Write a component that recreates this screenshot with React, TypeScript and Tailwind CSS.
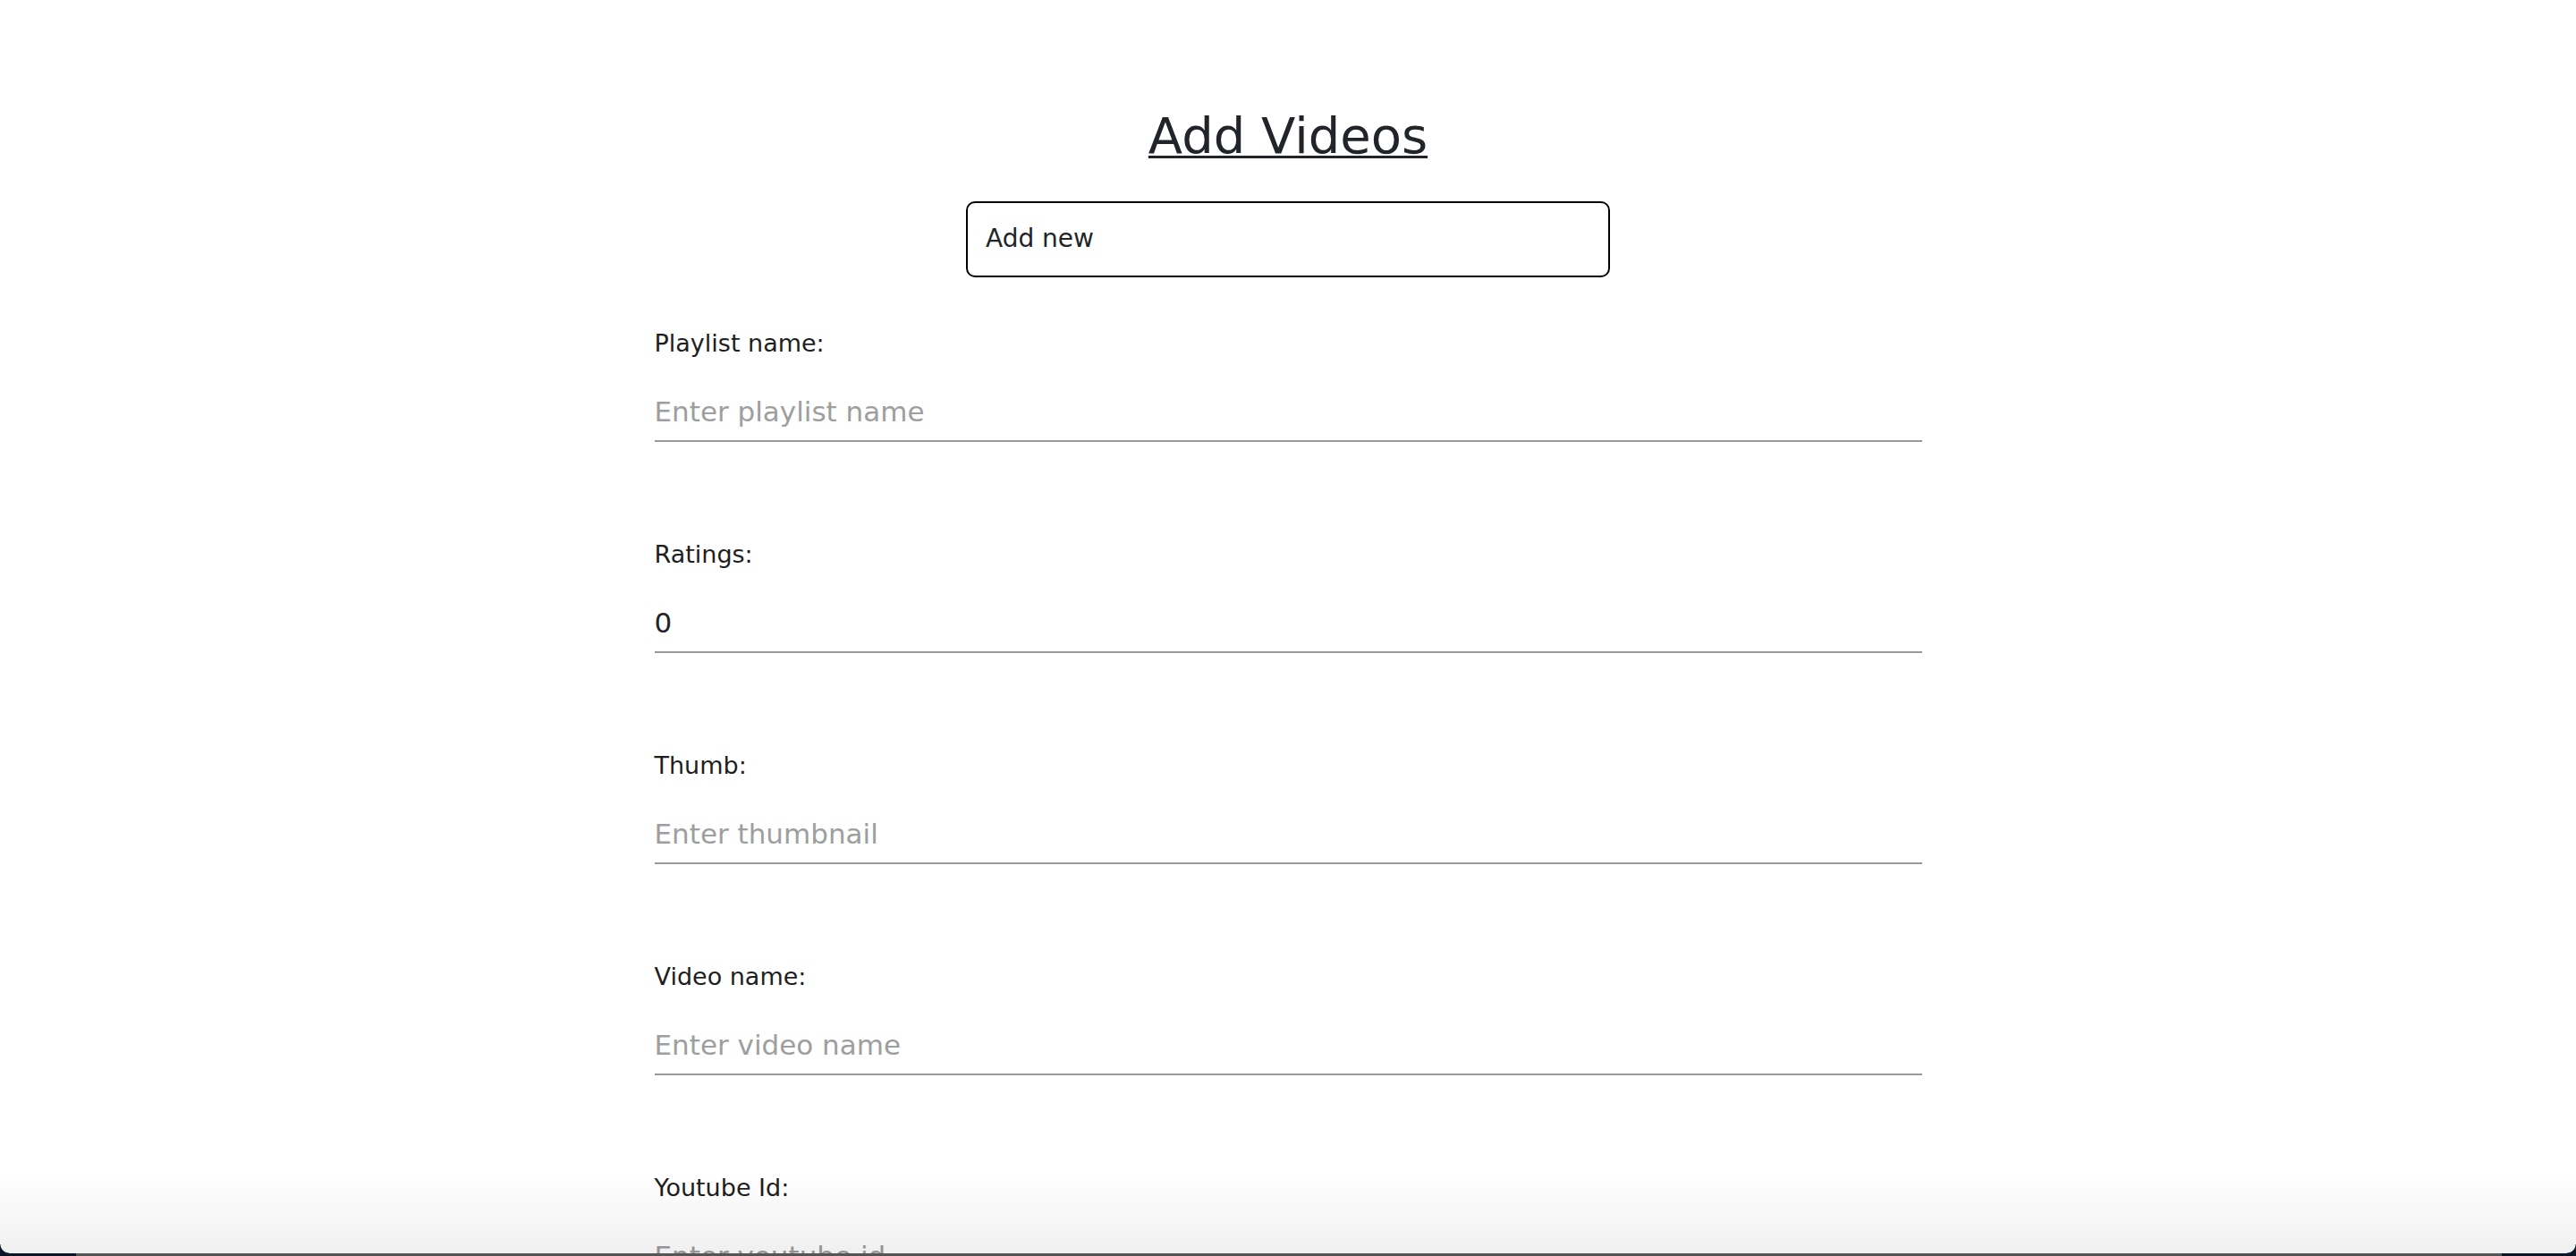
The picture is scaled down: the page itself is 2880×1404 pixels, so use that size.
import React from 'react';

interface Field {
  label: string;
  placeholder: string;
  value?: string;
}

const fields: Field[] = [
  { label: 'Playlist name:', placeholder: 'Enter playlist name' },
  { label: 'Ratings:', placeholder: 'Enter ratings', value: '0' },
  { label: 'Thumb:', placeholder: 'Enter thumbnail' },
  { label: 'Video name:', placeholder: 'Enter video name' },
  { label: 'Youtube Id:', placeholder: 'Enter youtube id' },
];

const App: React.FC = () => {
  return (
    <div className="min-h-screen bg-white text-[#212529] font-['DejaVu_Sans',sans-serif]">
      <div className="pt-[120px] pb-[200px]">
        {/* Title */}
        <h1 className="text-center text-[56px] leading-[64px] font-normal underline decoration-[3px] underline-offset-[3px]">
          Add Videos
        </h1>

        {/* Playlist picker */}
        <input
          readOnly
          defaultValue="Add new"
          className="block mx-auto mt-[41px] w-[720px] h-[85px] px-[20px] pb-[3px] border-2 border-black rounded-[10px] text-[28px] text-[#212529] outline-none bg-white"
        />

        {/* Form */}
        <form className="w-[1417px] mx-auto mt-[58px] flex flex-col gap-[110px]">
          {fields.map((f) => (
            <div key={f.label} className="flex flex-col">
              <label className="text-[27px] leading-[32px] text-[#1e1e1e]">{f.label}</label>
              <input
                defaultValue={f.value}
                placeholder={f.placeholder}
                className="mt-[27px] h-[67px] p-0 border-b-2 border-[#999] text-[31px] text-[#212529] placeholder:text-[#9e9e9e] outline-none bg-transparent"
              />
            </div>
          ))}
        </form>
      </div>

      {/* window bottom edge */}
      <div className="fixed inset-x-0 bottom-0 pointer-events-none">
        <div className="relative h-[90px] bg-gradient-to-b from-transparent to-black/[0.06]">
          <div className="absolute left-0 bottom-0 w-[10px] h-[10px] bg-[radial-gradient(circle_at_top_right,transparent_9px,#0b1626_10px)]" />
          <div className="absolute right-0 bottom-0 w-[10px] h-[10px] bg-[radial-gradient(circle_at_top_left,transparent_9px,#0b1626_10px)]" />
        </div>
        <div className="flex h-[3px]">
          <div className="w-[85px] bg-[#0b1626]" />
          <div className="flex-1 bg-[#555]" />
          <div className="w-[83px] bg-[#0b1626]" />
        </div>
      </div>
    </div>
  );
};

export default App;
